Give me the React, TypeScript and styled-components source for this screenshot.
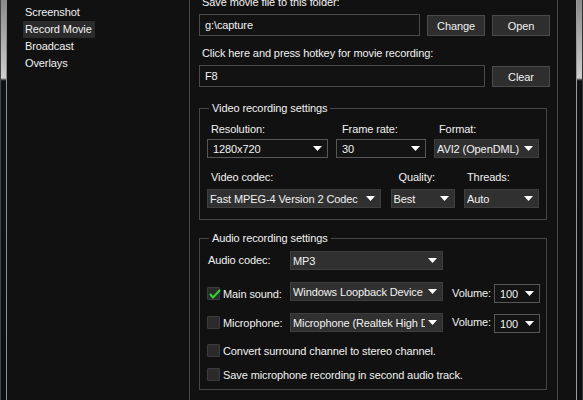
import React from "react"
import styled, { createGlobalStyle } from "styled-components"

const GlobalStyle = createGlobalStyle`
  html, body {
    margin: 0;
    padding: 0;
    background: #111;
  }
  body {
    font-family: "Liberation Sans", Arial, sans-serif;
    font-size: 11px;
    letter-spacing: -0.1px;
    color: #f2f2f2;
  }
`

const Frame = styled.div`
  display: flex;
  width: 583px;
  height: 400px;
  overflow: hidden;
  background: #111;
`

const WindowEdge = styled.div<{ $side: "left" | "right" }>`
  flex: none;
  width: ${p => (p.$side === "left" ? 7 : 6)}px;
  box-sizing: border-box;
  background: linear-gradient(to bottom, #8a8a8a 0, #cfcfcf 78px, #3a3a3a 80px, #0c1317 81px, #0a0f12 100%);
  ${p => (p.$side === "left" ? "border-right: 1px solid #8e8e8e; box-shadow: inset 1px 0 #444;" : "box-shadow: inset -1px 0 #333;")}
`

const Sidebar = styled.nav`
  flex: none;
  width: 183px;
  box-sizing: border-box;
  border-right: 1px solid #474747;
  padding: 4px 0 0 16px;
  display: flex;
  flex-direction: column;
  align-items: flex-start;
`

const NavItem = styled.div<{ $active?: boolean }>`
  height: 17px;
  line-height: 17px;
  padding: 0 3px 0 2px;
  background: ${p => (p.$active ? "#2b2b2b" : "transparent")};
`

const Main = styled.main`
  flex: none;
  width: 368px;
  box-sizing: border-box;
  border-right: 1px solid #474747;
  padding: 0 7px 0 9px;
`

const Gutter = styled.div`
  flex: none;
  width: 19px;
  box-sizing: border-box;
  border-right: 1px solid #9a9a9a;
`

const Content = styled.div`
  margin-top: -4px;
  display: flex;
  flex-direction: column;
`

const Caption = styled.div<{ $top?: number }>`
  line-height: 13px;
  padding-left: 3px;
  margin-top: ${p => p.$top ?? 0}px;
  margin-bottom: 5px;
  white-space: nowrap;
`

const PathRow = styled.div<{ $buttons: number }>`
  display: grid;
  grid-template-columns: 1fr repeat(${p => p.$buttons}, 58px);
  column-gap: 7px;
  align-items: end;
`

const TextBox = styled.div`
  height: 22px;
  box-sizing: border-box;
  border: 1px solid #4a4a4a;
  background: #121212;
  padding-left: 5px;
  line-height: 20px;
`

const Button = styled.button`
  height: 21px;
  box-sizing: border-box;
  border: 1px solid #4a4a4a;
  background: #2e2e2e;
  color: #f2f2f2;
  font: inherit;
  letter-spacing: inherit;
  padding: 0;
`

const Group = styled.fieldset<{ $top: number }>`
  margin: ${p => p.$top}px 3px 0 0;
  padding: 0 7px;
  border: 1px solid #464646;
  min-width: 0;
`

const GroupTitle = styled.legend`
  margin-left: 2px;
  padding: 0 3px;
  line-height: 13px;
`

const GroupBody = styled.div<{ $top: number; $bottom: number }>`
  padding: ${p => p.$top}px 0 ${p => p.$bottom}px;
  display: flex;
  flex-direction: column;
`

const VideoRow = styled.div<{ $cols: string; $top?: number }>`
  display: grid;
  grid-template-columns: ${p => p.$cols};
  justify-content: space-between;
  margin-top: ${p => p.$top ?? 0}px;
`

const Field = styled.div`
  display: flex;
  flex-direction: column;
`

const FieldLabel = styled.div<{ $gap: number; $indent: number }>`
  line-height: 13px;
  padding-left: ${p => p.$indent}px;
  margin-bottom: ${p => p.$gap}px;
  white-space: nowrap;
`

const SelectBox = styled.div<{ $editable?: boolean; $shift?: number }>`
  display: flex;
  align-items: center;
  height: 19px;
  box-sizing: border-box;
  border: 1px solid ${p => (p.$editable ? "#575757" : "#3e3e3e")};
  background: ${p => (p.$editable ? "#131313" : "#303030")};
  padding: 0 5px 0 ${p => (p.$editable ? 5 : 2)}px;
  margin-top: ${p => p.$shift ?? 0}px;
`

const SelectValue = styled.span`
  flex: 1;
  overflow: hidden;
  white-space: nowrap;
`

const Arrow = styled.svg`
  flex: none;
  margin-left: 3px;
`

const AudioRow = styled.div<{ $top: number }>`
  display: grid;
  grid-template-columns: 83px 153px 51px 46px;
  align-items: start;
  margin-top: ${p => p.$top}px;
`

const RowLabel = styled.div<{ $indent?: number }>`
  line-height: 19px;
  padding-left: ${p => p.$indent ?? 0}px;
  white-space: nowrap;
`

const CheckLine = styled.div`
  display: flex;
  align-items: center;
  height: 19px;
  white-space: nowrap;
`

const Box = styled.span`
  position: relative;
  flex: none;
  width: 13px;
  height: 13px;
  box-sizing: border-box;
  margin-right: 3px;
  border: 1px solid #3c3c3c;
  background: #2b2b2b;
  border-radius: 1px;
`

const Tick = styled.svg`
  position: absolute;
  left: 0;
  top: 0;
  overflow: visible;
`

const Select = ({ value, editable, shift }: { value: string; editable?: boolean; shift?: number }) => (
  <SelectBox $editable={editable} $shift={shift}>
    <SelectValue>{value}</SelectValue>
    <Arrow width="9" height="5" viewBox="0 0 9 5">
      <polygon points="0,0 9,0 4.5,5" fill="#fff" />
    </Arrow>
  </SelectBox>
)

const Check = ({ label, checked }: { label: string; checked?: boolean }) => (
  <CheckLine>
    <Box>
      {checked && (
        <Tick width="13" height="13" viewBox="0 0 13 13">
          <path d="M2.5 6.5 L5 9.5 L11.5 2.5" fill="none" stroke="#2fd82f" strokeWidth="2" strokeLinecap="round" strokeLinejoin="round" />
        </Tick>
      )}
    </Box>
    {label}
  </CheckLine>
)

const navItems = ["Screenshot", "Record Movie", "Broadcast", "Overlays"]

export default function App() {
  return (
    <>
      <GlobalStyle />
      <Frame>
        <WindowEdge $side="left" />
        <Sidebar>
          {navItems.map(item => (
            <NavItem key={item} $active={item === "Record Movie"}>
              {item}
            </NavItem>
          ))}
        </Sidebar>
        <Main>
          <Content>
            <Caption>Save movie file to this folder:</Caption>
            <PathRow $buttons={2}>
              <TextBox>g:\capture</TextBox>
              <Button>Change</Button>
              <Button>Open</Button>
            </PathRow>
            <Caption $top={11}>Click here and press hotkey for movie recording:</Caption>
            <PathRow $buttons={1}>
              <TextBox>F8</TextBox>
              <Button>Clear</Button>
            </PathRow>

            <Group $top={15}>
              <GroupTitle>Video recording settings</GroupTitle>
              <GroupBody $top={8} $bottom={11}>
                <VideoRow $cols="121px 90px 105px">
                  <Field>
                    <FieldLabel $gap={3} $indent={4}>Resolution:</FieldLabel>
                    <Select value="1280x720" editable />
                  </Field>
                  <Field>
                    <FieldLabel $gap={3} $indent={6}>Frame rate:</FieldLabel>
                    <Select value="30" editable />
                  </Field>
                  <Field>
                    <FieldLabel $gap={3} $indent={5}>Format:</FieldLabel>
                    <Select value="AVI2 (OpenDML)" />
                  </Field>
                </VideoRow>
                <VideoRow $cols="174px 64px 75px" $top={13}>
                  <Field>
                    <FieldLabel $gap={5} $indent={4}>Video codec:</FieldLabel>
                    <Select value="Fast MPEG-4 Version 2 Codec" />
                  </Field>
                  <Field>
                    <FieldLabel $gap={5} $indent={8}>Quality:</FieldLabel>
                    <Select value="Best" />
                  </Field>
                  <Field>
                    <FieldLabel $gap={5} $indent={3}>Threads:</FieldLabel>
                    <Select value="Auto" />
                  </Field>
                </VideoRow>
              </GroupBody>
            </Group>

            <Group $top={12}>
              <GroupTitle>Audio recording settings</GroupTitle>
              <GroupBody $top={6} $bottom={5}>
                <AudioRow $top={0}>
                  <RowLabel $indent={1}>Audio codec:</RowLabel>
                  <Select value="MP3" />
                </AudioRow>
                <AudioRow $top={14}>
                  <Check label="Main sound:" checked />
                  <Select value="Windows Loopback Device" shift={-2} />
                  <RowLabel $indent={9}>Volume:</RowLabel>
                  <Select value="100" editable />
                </AudioRow>
                <AudioRow $top={10}>
                  <Check label="Microphone:" />
                  <Select value="Microphone (Realtek High Definition Audio)" />
                  <RowLabel $indent={9}>Volume:</RowLabel>
                  <Select value="100" editable shift={1} />
                </AudioRow>
                <AudioRow $top={8}>
                  <Check label="Convert surround channel to stereo channel." />
                </AudioRow>
                <AudioRow $top={5}>
                  <Check label="Save microphone recording in second audio track." />
                </AudioRow>
              </GroupBody>
            </Group>
          </Content>
        </Main>
        <Gutter />
        <WindowEdge $side="right" />
      </Frame>
    </>
  )
}
